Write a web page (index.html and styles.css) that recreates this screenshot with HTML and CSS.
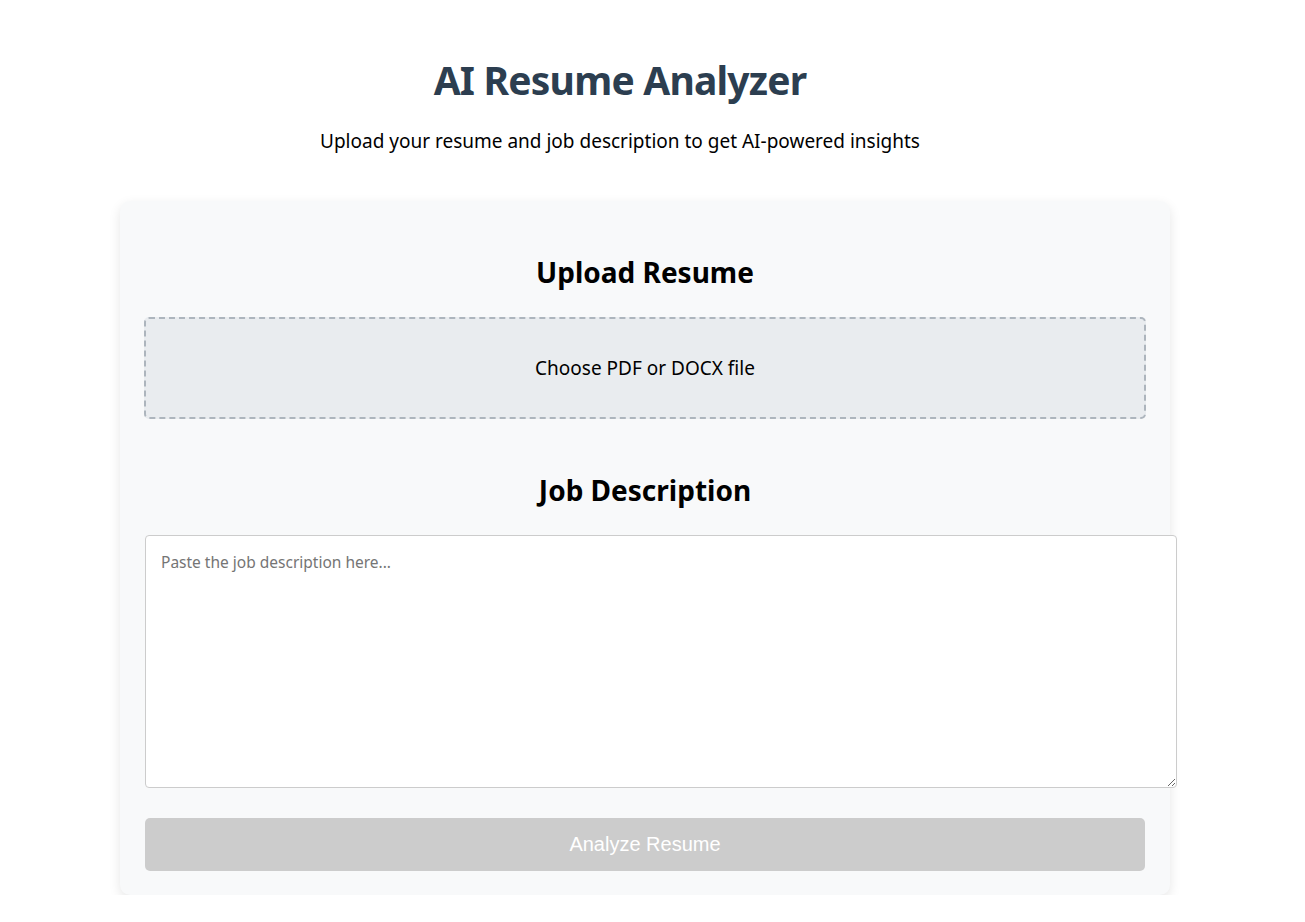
FILE: index.html
```html
<!DOCTYPE html>
<html lang="en">
<head>
<meta charset="utf-8">
<title>AI Resume Analyzer</title>
<link rel="stylesheet" href="styles.css">
</head>
<body>
<div class="app">
  <header class="header">
    <h1 class="title">AI Resume Analyzer</h1>
    <p class="subtitle">Upload your resume and job description to get AI-powered insights</p>
  </header>
  <main class="card">
    <section class="section">
      <h2 class="section-title">Upload Resume</h2>
      <label class="upload-box">Choose PDF or DOCX file</label>
    </section>
    <section class="section">
      <h2 class="section-title">Job Description</h2>
      <textarea class="job-text" placeholder="Paste the job description here..."></textarea>
    </section>
    <button class="analyze-btn" disabled>Analyze Resume</button>
  </main>
</div>
</body>
</html>
```
FILE: styles.css
```css
html, body {
  margin: 0;
  padding: 0;
  background: #ffffff;
}
body {
  font-family: "Noto Sans", "Open Sans", sans-serif;
  color: #000;
}
.app {
  width: 1290px;
  padding-top: 50px;
}
.header {
  width: 1240px;
  text-align: center;
}
.title {
  margin: 0;
  font-size: 39px;
  line-height: 60px;
  font-weight: 700;
  letter-spacing: -0.8px;
  color: #2c3e50;
}
.subtitle {
  margin: 18px 0 0;
  font-size: 19px;
  line-height: 26px;
}
.card {
  width: 1000px;
  margin: 47px auto 0;
  padding: 25px 25px 24px;
  background: #f8f9fa;
  border-radius: 10px;
  box-shadow: 0 4px 12px rgba(0, 0, 0, 0.1);
}
.section {
  margin-bottom: 51px;
}
.section + .section {
  margin-bottom: 30px;
}
.section-title {
  margin: 26px 0 25px;
  text-align: center;
  font-size: 28px;
  line-height: 40px;
  font-weight: 700;
}
.upload-box {
  display: flex;
  align-items: center;
  justify-content: center;
  box-sizing: border-box;
  margin: 0 -1px;
  height: 102px;
  border: 2px dashed #adb5bd;
  border-radius: 5px;
  background: #e9ecef;
  font-size: 19px;
  cursor: pointer;
}
.job-text {
  display: block;
  width: 100%;
  height: 221px;
  padding: 15px;
  border: 1px solid #ccc;
  border-radius: 4px;
  background: #fff;
  font-family: "Noto Sans", "Open Sans", sans-serif;
  font-size: 15.5px;
  resize: vertical;
}
.job-text::placeholder {
  color: #757575;
}
.analyze-btn {
  display: block;
  width: 100%;
  height: 53px;
  border: none;
  border-radius: 5px;
  background: #cccccc;
  color: #ffffff;
  font-family: "Liberation Sans", Arial, sans-serif;
  font-size: 20px;
}
```
